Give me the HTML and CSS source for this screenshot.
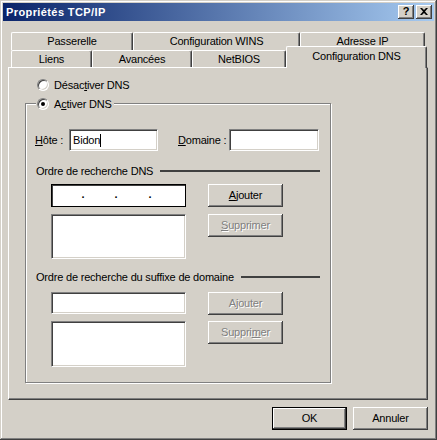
FILE: index.html
```html
<!DOCTYPE html>
<html lang="fr">
<head>
<meta charset="utf-8">
<title>Propriétés TCP/IP</title>
<link rel="stylesheet" href="styles.css">
</head>
<body>
<div class="window">
  <div class="titlebar">
    <span class="title">Propriétés TCP/IP</span>
    <div class="title-buttons">
      <div class="tbtn help">?</div>
      <div class="tbtn close">
        <svg width="8" height="7" viewBox="0 0 8 7"><path d="M0 0h2l2 2 2-2h2l-3 3.5 3 3.5h-2l-2-2-2 2h-2l3-3.5z" fill="#000"/></svg>
      </div>
    </div>
  </div>
  <div class="client">
    <div class="tabs">
      <div class="tab-row back">
        <div class="tab w-passerelle">Passerelle</div>
        <div class="tab w-wins">Configuration WINS</div>
        <div class="tab w-ip">Adresse IP</div>
      </div>
      <div class="tab-row front">
        <div class="tab w-liens">Liens</div>
        <div class="tab w-avancees">Avancées</div>
        <div class="tab w-netbios">NetBIOS</div>
        <div class="tab w-dns selected">Configuration DNS</div>
      </div>
    </div>
    <div class="panel">
      <div class="radio-row first">
        <span class="radio"></span><span>Désac<u>t</u>iver DNS</span>
      </div>
      <div class="groupbox">
        <div class="legend radio-row">
          <span class="radio checked"></span><span>A<u>c</u>tiver DNS</span>
        </div>
        <div class="host-row">
          <span class="label label-host"><u>H</u>ôte :</span>
          <div class="field field-host"><span>Bidon</span><span class="caret"></span></div>
          <span class="label label-domain"><u>D</u>omaine :</span>
          <div class="field field-domain"></div>
        </div>
        <div class="section-head head-dns">
          <span>Ordre de recherche DNS</span><span class="rule"></span>
        </div>
        <div class="item-row row-ip">
          <div class="ipfield">
            <span class="seg s1"></span><span class="dot">.</span>
            <span class="seg s2"></span><span class="dot">.</span>
            <span class="seg s3"></span><span class="dot">.</span>
          </div>
          <div class="button"><span><u>A</u>jouter</span></div>
        </div>
        <div class="item-row row-list">
          <div class="listbox"></div>
          <div class="button disabled"><span><u>S</u>upprimer</span></div>
        </div>
        <div class="section-head head-suffix">
          <span>Ordre de recherche du suffixe de domaine</span><span class="rule"></span>
        </div>
        <div class="item-row row-suffix">
          <div class="field field-suffix"></div>
          <div class="button disabled"><span>A<u>j</u>outer</span></div>
        </div>
        <div class="item-row row-list2">
          <div class="listbox tall"></div>
          <div class="button disabled"><span>Suppri<u>m</u>er</span></div>
        </div>
      </div>
    </div>
    <div class="dialog-buttons">
      <div class="button default"><span>OK</span></div>
      <div class="button"><span>Annuler</span></div>
    </div>
  </div>
</div>
</body>
</html>
```

FILE: styles.css
```css
* { box-sizing: border-box; }

html, body {
  margin: 0;
  padding: 0;
  background: #d4d0c8;
}

body {
  font-family: "Liberation Sans", Arial, sans-serif;
  font-size: 11px;
  letter-spacing: -0.2px;
  color: #000;
}

u { text-decoration: underline; text-underline-offset: 1px; }

.window {
  width: 437px;
  height: 440px;
  padding: 3px;
  background: #d4d0c8;
  box-shadow:
    inset -1px -1px #404040,
    inset 1px 1px #d4d0c8,
    inset -2px -2px #808080,
    inset 2px 2px #fff;
}

.titlebar {
  height: 18px;
  display: flex;
  align-items: center;
  justify-content: space-between;
  padding: 0 2px 0 3px;
  background: linear-gradient(to right, #0a246a, #a6caf0);
}

.title {
  color: #fff;
  font-weight: bold;
  font-size: 11px;
  letter-spacing: 0.4px;
}

.title-buttons {
  display: flex;
}

.tbtn {
  width: 16px;
  height: 14px;
  background: #d4d0c8;
  display: flex;
  align-items: center;
  justify-content: center;
  box-shadow:
    inset -1px -1px #404040,
    inset 1px 1px #fff,
    inset -2px -2px #808080;
  font-weight: bold;
  font-size: 11px;
  letter-spacing: 0;
  line-height: 1;
}

.tbtn.help { margin-right: 1px; padding-bottom: 1px; }
.tbtn.close { margin-left: 1px; padding-bottom: 1px; }

.client {
  padding: 11px 6px 0 5px;
}

.tabs {
  padding-left: 3px;
}

.tab-row {
  display: flex;
}

.tab-row.back { height: 18px; }
.tab-row.front { height: 17px; }

.tab {
  height: 100%;
  display: flex;
  align-items: center;
  justify-content: center;
  border-top: 1px solid #fff;
  border-left: 1px solid #fff;
  border-right: 1px solid #404040;
  box-shadow: inset -1px 0 #808080;
  border-radius: 2px 2px 0 0;
  background: #d4d0c8;
  white-space: nowrap;
  padding-bottom: 1px;
}

.w-passerelle { width: 122px; }
.w-wins { width: 167px; }
.w-ip { width: 125px; }
.w-liens { width: 81px; }
.w-avancees { width: 100px; }
.w-netbios { width: 94px; }
.w-dns { width: 141px; }

.tab.selected {
  position: relative;
  z-index: 1;
  height: 22px;
  margin-top: -4px;
  margin-bottom: -1px;
  padding-bottom: 3px;
}

.panel {
  width: 420px;
  height: 333px;
  border-top: 1px solid #fff;
  border-left: 1px solid #fff;
  border-right: 1px solid #404040;
  border-bottom: 1px solid #404040;
  box-shadow: inset -1px -1px #808080;
  padding: 10px 0 0 16px;
}

.radio-row {
  display: flex;
  align-items: center;
  height: 13px;
  gap: 5px;
}

.radio-row.first {
  margin-left: 12px;
}

.radio {
  width: 12px;
  height: 12px;
  border-radius: 50%;
  background: #fff;
  border: 1px solid;
  border-color: #808080 #fff #fff #808080;
  box-shadow: inset 1px 1px #404040, inset -1px -1px #d4d0c8;
  position: relative;
  flex: none;
}

.radio.checked::after {
  content: "";
  position: absolute;
  left: 3px;
  top: 3px;
  width: 4px;
  height: 4px;
  border-radius: 50%;
  background: #000;
}

.groupbox {
  margin-top: 12px;
  width: 306px;
  height: 280px;
  border: 1px solid #808080;
  box-shadow: inset 1px 1px #fff, 1px 1px #fff;
}

.legend {
  width: max-content;
  margin-top: -7px;
  margin-left: 10px;
  padding: 0 2px 0 1px;
  background: #d4d0c8;
}

.host-row {
  display: flex;
  align-items: center;
  margin-top: 19px;
  height: 22px;
  padding-left: 9px;
}

.label-host { width: 34px; }
.label-domain { width: 51px; margin-left: 20px; }

.field {
  height: 22px;
  background: #fff;
  border: 1px solid;
  border-color: #808080 #fff #fff #808080;
  box-shadow: inset 1px 1px #404040, inset -1px -1px #d4d0c8;
  display: flex;
  align-items: center;
  padding-left: 3px;
}

.field-host { width: 89px; }
.field-domain { width: 90px; }
.field-suffix { width: 135px; }

.caret {
  width: 1px;
  height: 13px;
  background: #000;
}

.section-head {
  display: flex;
  align-items: center;
  height: 14px;
  margin-left: 10px;
  margin-right: 10px;
}

.section-head .rule {
  flex: 1;
  height: 2px;
  background: #404040;
  margin-left: 7px;
}

.head-dns { margin-top: 13px; }
.head-suffix { margin-top: 11px; }

.item-row {
  display: flex;
  align-items: flex-start;
  margin-left: 25px;
  gap: 22px;
}

.row-ip { margin-top: 6px; }
.row-list { margin-top: 7px; }
.row-suffix { margin-top: 8px; }
.row-list2 { margin-top: 6px; }

.ipfield {
  width: 135px;
  height: 23px;
  background: #fff;
  border: 1px solid #000;
  box-shadow: inset 1px 1px #404040;
  display: flex;
  align-items: center;
  padding-left: 1px;
}

.seg { height: 1px; }
.s1 { width: 28px; }
.s2 { width: 29px; }
.s3 { width: 30px; }

.dot {
  width: 4px;
  text-align: center;
  font-weight: bold;
  line-height: 1;
  padding-bottom: 3px;
}

.listbox {
  width: 135px;
  height: 45px;
  background: #fff;
  border: 1px solid;
  border-color: #808080 #fff #fff #808080;
  box-shadow: inset 1px 1px #404040, inset -1px -1px #d4d0c8;
}

.listbox.tall { height: 46px; }

.button {
  width: 75px;
  height: 23px;
  background: #d4d0c8;
  display: flex;
  align-items: center;
  justify-content: center;
  box-shadow:
    inset -1px -1px #404040,
    inset 1px 1px #fff,
    inset -2px -2px #808080;
  padding-bottom: 1px;
}

.button.disabled {
  color: #808080;
  text-shadow: 1px 1px #fff;
}

.button.default {
  box-shadow:
    inset 0 0 0 1px #000,
    inset -2px -2px #404040,
    inset 2px 2px #fff,
    inset -3px -3px #808080;
}

.dialog-buttons {
  display: flex;
  justify-content: flex-end;
  gap: 6px;
  margin-top: 7px;
  width: 420px;
}
```
